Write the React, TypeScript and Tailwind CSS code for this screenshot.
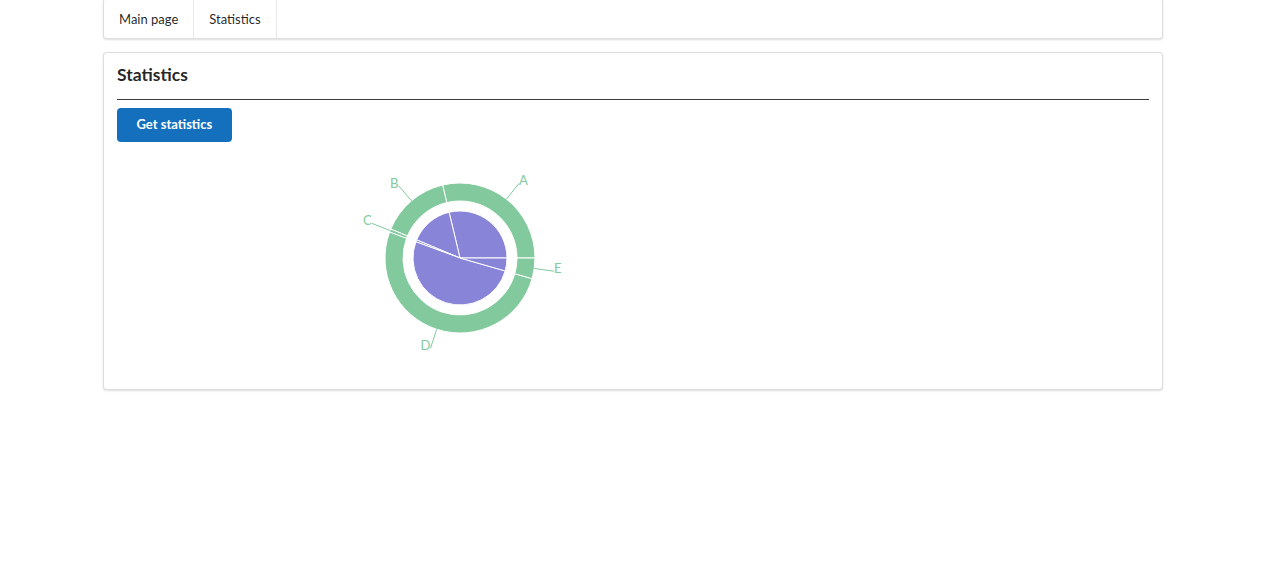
import type { ReactNode } from 'react';

type Slice = { name: string; start: number; end: number };

// angles in degrees, counter-clockwise from 3 o'clock (recharts style)
const slices: Slice[] = [
    { name: 'A', start: 0, end: 103.4 },
    { name: 'B', start: 103.4, end: 157.3 },
    { name: 'C', start: 157.3, end: 159.8 },
    { name: 'D', start: 159.8, end: 344 },
    { name: 'E', start: 344, end: 360 },
];

const CX = 343;
const CY = 116;
const RAD = Math.PI / 180;

function pt(r: number, a: number) {
    return [CX + r * Math.cos(a * RAD), CY - r * Math.sin(a * RAD)];
}

function piePath(r: number, s: number, e: number) {
    const [x1, y1] = pt(r, s);
    const [x2, y2] = pt(r, e);
    const large = e - s > 180 ? 1 : 0;
    return `M${CX},${CY} L${x1},${y1} A${r},${r} 0 ${large} 0 ${x2},${y2} Z`;
}

function ringPath(ri: number, ro: number, s: number, e: number) {
    const [a1, b1] = pt(ro, s);
    const [a2, b2] = pt(ro, e);
    const [c1, d1] = pt(ri, e);
    const [c2, d2] = pt(ri, s);
    const large = e - s > 180 ? 1 : 0;
    return `M${a1},${b1} A${ro},${ro} 0 ${large} 0 ${a2},${b2} L${c1},${d1} A${ri},${ri} 0 ${large} 1 ${c2},${d2} Z`;
}

function TwoLevelPie() {
    return (
        <svg width={500} height={234} className="block">
            {slices.map((s) => (
                <path key={`i-${s.name}`} d={piePath(47, s.start, s.end)} fill="#8884d8" stroke="#fff" strokeWidth={1} />
            ))}
            {slices.map((s) => (
                <path key={`o-${s.name}`} d={ringPath(57, 75, s.start, s.end)} fill="#82ca9d" stroke="#fff" strokeWidth={1} />
            ))}
            {slices.map((s) => {
                const mid = (s.start + s.end) / 2;
                const [x1, y1] = pt(75, mid);
                const [x2, y2] = pt(95, mid);
                return (
                    <g key={`l-${s.name}`}>
                        <path d={`M${x1},${y1} L${x2},${y2}`} stroke="#82ca9d" fill="none" />
                        <text
                            x={x2}
                            y={y2 - 3}
                            fill="#82ca9d"
                            fontSize={13}
                            textAnchor={x2 > CX ? 'start' : 'end'}
                            dominantBaseline="central"
                        >
                            {s.name}
                        </text>
                    </g>
                );
            })}
        </svg>
    );
}

function MenuItem({ children }: { children: ReactNode }) {
    return (
        <div className="flex items-center border-r border-[rgba(34,36,38,0.1)] px-[15px] pt-[3px] text-[13px] text-[rgba(0,0,0,0.87)]">
            {children}
        </div>
    );
}

export default function App() {
    return (
        <div className="min-h-screen bg-white font-['Lato','Helvetica_Neue',Arial,sans-serif]">
            <div className="mx-auto w-[1060px]">
                <div className="-mt-[2px] flex h-[41px] rounded-[4px] border border-[rgba(34,36,38,0.15)] bg-white shadow-[0_1px_2px_0_rgba(34,36,38,0.15)]">
                    <MenuItem>Main page</MenuItem>
                    <MenuItem>Statistics</MenuItem>
                </div>

                <div className="mt-[13px] rounded-[4px] border border-[rgba(34,36,38,0.15)] bg-white p-[13px] shadow-[0_1px_2px_0_rgba(34,36,38,0.15)]">
                    <div className="border-b border-[#3d3d3d] pb-[15px] text-[17.5px] font-bold leading-[18px] text-[rgba(0,0,0,0.87)]">
                        Statistics
                    </div>
                    <button
                        type="button"
                        className="mt-[8px] h-[34px] rounded-[4px] bg-[#1470bd] px-[19.5px] text-[13px] font-bold text-white"
                    >
                        Get statistics
                    </button>
                    <TwoLevelPie />
                </div>
            </div>
        </div>
    );
}
